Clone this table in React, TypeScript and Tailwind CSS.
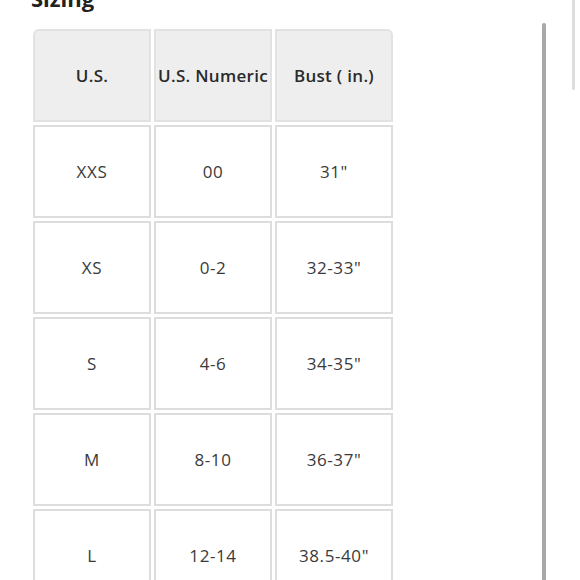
import React from "react";

const rows = [
  ["XXS", "00", "31\""],
  ["XS", "0-2", "32-33\""],
  ["S", "4-6", "34-35\""],
  ["M", "8-10", "36-37\""],
  ["L", "12-14", "38.5-40\""],
];

export default function App() {
  return (
    <div
      className="relative w-[580px] h-[580px] overflow-hidden bg-white"
      style={{ fontFamily: '"Open Sans", "Noto Sans", sans-serif' }}
    >
      <div className="pl-[33px]">
        <div className="-mt-[13px] -ml-[2px] text-[22px] leading-[22px] font-bold text-[#222]">Sizing</div>
        <div className="mt-[20px] grid grid-cols-[118px_118px_118px] auto-rows-[93px] gap-[3px]">
          {["U.S.", "U.S. Numeric", "Bust ( in.)"].map((h, i) => (
            <div
              key={h}
              className={`flex items-center justify-center bg-[#eeeeee] border-2 border-[#e2e2e2] text-[17px] font-semibold text-[#2a2a2a] whitespace-nowrap tracking-[0.3px] ${
                i === 0 ? "rounded-tl-[6px]" : ""
              } ${i === 2 ? "rounded-tr-[6px]" : ""}`}
            >
              {h}
            </div>
          ))}
          {rows.map((r) =>
            r.map((c, j) => (
              <div
                key={r[0] + j}
                className="flex items-center justify-center bg-white border-2 border-[#dddddd] text-[17px] font-normal text-[#3a3a3a] tracking-[0.6px]"
              >
                {c}
              </div>
            ))
          )}
        </div>
      </div>
      <div className="absolute left-[542px] top-[23px] w-[4px] h-[570px] rounded-t-full bg-[#a8a8a8]" />
      <div className="absolute left-[572px] top-0 w-[3px] h-[90px] rounded-b-full bg-[#dedede]" />
    </div>
  );
}
